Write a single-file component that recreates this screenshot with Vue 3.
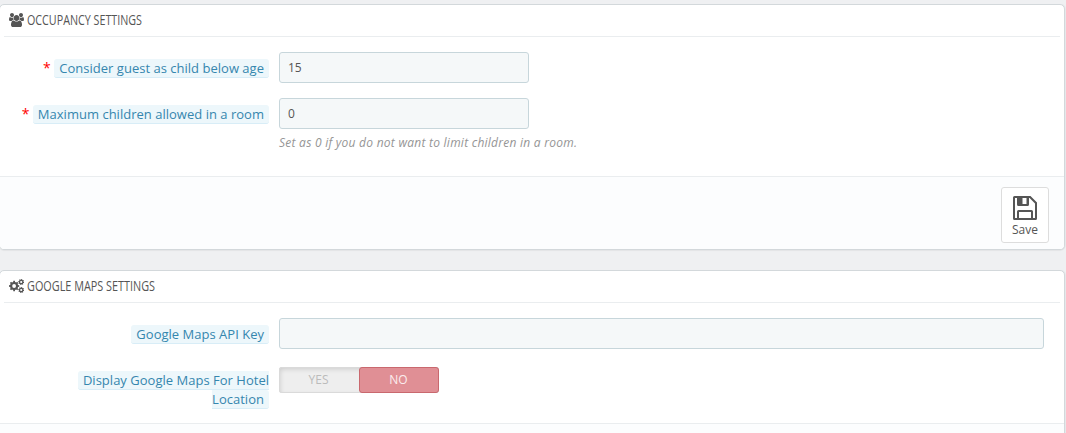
<script setup>
import { ref } from 'vue'

const childAge = ref('15')
const maxChildren = ref('0')
const apiKey = ref('')

// Outline of a toothed wheel with a round hole
function gear(cx, cy, outer, root, hole, teeth, turn = 0) {
  const step = (Math.PI * 2) / teeth
  const points = []
  for (let i = 0; i < teeth; i++) {
    const a = i * step + turn
    for (const [r, k] of [[root, -0.3], [outer, -0.2], [outer, 0.2], [root, 0.3]]) {
      points.push(`${(cx + r * Math.cos(a + k * step)).toFixed(2)} ${(cy + r * Math.sin(a + k * step)).toFixed(2)}`)
    }
  }
  return `M${points.join('L')}ZM${cx - hole} ${cy}a${hole} ${hole} 0 1 0 ${hole * 2} 0a${hole} ${hole} 0 1 0 ${-hole * 2} 0Z`
}

const gears = [
  gear(5.1, 7, 5.2, 4.1, 1.9, 8),
  gear(12.2, 3, 3, 2.4, 1.1, 8, 0.2),
  gear(12.2, 11, 3, 2.4, 1.1, 8, 0.2),
].join('')
</script>

<template>
  <main class="page">
    <section class="panel">
      <h3 class="heading">
        <svg class="heading-icon" viewBox="0 0 1920 1792">
          <path d="M593 896q-162 5-265 128h-134q-82 0-138-40.500t-56-118.500q0-353 124-353 6 0 43.500 21t97.500 42.500 119 21.500q67 0 133-23-5 37-5 66 0 139 81 256zm1071 637q0 120-73 189.500t-194 69.500h-874q-121 0-194-69.500t-73-189.500q0-53 3.500-103.500t14-109 26.500-108.500 43-97.500 62-81 85.500-53.500 111.500-20q10 0 43 21.500t73 48 107 48 135 21.500 135-21.500 107-48 73-48 43-21.500q61 0 111.500 20t85.500 53.500 62 81 43 97.500 26.500 108.500 14 109 3.500 103.500zm-1024-1277q0 106-75 181t-181 75-181-75-75-181 75-181 181-75 181 75 75 181zm704 384q0 159-112.500 271.500t-271.500 112.500-271.500-112.500-112.500-271.500 112.500-271.500 271.500-112.500 271.500 112.500 112.500 271.500zm576 225q0 78-56 118.500t-138 40.500h-134q-103-123-265-128 81-117 81-256 0-29-5-66 66 23 133 23 59 0 119-21.500t97.500-42.500 43.500-21q124 0 124 353zm-128-609q0 106-75 181t-181 75-181-75-75-181 75-181 181-75 181 75 75 181z" />
        </svg>
        <svg class="heading-text" width="116" height="20">
          <text x="0" y="13.500" textLength="115" lengthAdjust="spacingAndGlyphs">OCCUPANCY SETTINGS</text>
        </svg>
      </h3>
      <div class="body">
        <div class="row">
          <label class="label"><span class="star">*</span><span class="tag">Consider guest as child below age</span></label>
          <input v-model="childAge" class="input short" type="text">
        </div>
        <div class="row">
          <label class="label"><span class="star">*</span><span class="tag">Maximum children allowed in a room</span></label>
          <div class="field">
            <input v-model="maxChildren" class="input short" type="text">
            <p class="help">Set as 0 if you do not want to limit children in a room.</p>
          </div>
        </div>
      </div>
      <footer class="footer">
        <button class="save" type="button">
          <svg width="24" height="24" viewBox="0 0 24 24">
            <path fill-rule="evenodd" d="M1.500 0H17.500L24 6.500V22.500Q24 24 22.500 24H1.500Q0 24 0 22.500V1.500Q0 0 1.500 0ZM2 2V22H4V15.500Q4 14 5.500 14H18.500Q20 14 20 15.500V22H22V7.400L16.600 2H16V8.500Q16 10 14.500 10H5.500Q4 10 4 8.500V2ZM6 16V22H18V16ZM9.500 2V8H13.500V2Z" />
          </svg>
          <span>Save</span>
        </button>
      </footer>
    </section>

    <section class="panel">
      <h3 class="heading">
        <svg class="heading-icon" viewBox="0 0 15 14"><path fill-rule="evenodd" :d="gears" /></svg>
        <svg class="heading-text" width="129" height="20">
          <text x="0" y="13.500" textLength="128" lengthAdjust="spacingAndGlyphs">GOOGLE MAPS SETTINGS</text>
        </svg>
      </h3>
      <div class="body maps">
        <div class="row">
          <label class="label"><span class="tag">Google Maps API Key</span></label>
          <input v-model="apiKey" class="input" type="text">
        </div>
        <div class="row">
          <label class="label"><span class="tag">Display Google Maps For Hotel Location</span></label>
          <div class="switch">
            <span class="option">YES</span>
            <span class="option active">NO</span>
          </div>
        </div>
      </div>
      <footer class="footer"></footer>
    </section>
  </main>
</template>

<style>
body {
  background: #eff0f2;
  overflow: hidden;
}
</style>

<style scoped>
.page {
  box-sizing: border-box;
  width: 1066px;
  height: 433px;
  padding-top: 4px;
  overflow: hidden;
  background: #eff0f2;
  color: #555;
  font: 13px/19px "Open Sans", "Noto Sans", sans-serif;
}
.panel {
  box-sizing: border-box;
  width: 1066px;
  height: 246px;
  margin: 0 0 20px -1px;
  display: flex;
  flex-direction: column;
  background: #fff;
  border: 1px solid #d3d8db;
  border-radius: 5px;
  box-shadow: 0 1px 1px rgba(0, 0, 0, 0.05), 1px 0 0 #e6e9eb;
  overflow: hidden;
}
.heading {
  flex: none;
  box-sizing: border-box;
  height: 32px;
  margin: 0 4px;
  padding-left: 5px;
  display: flex;
  align-items: center;
  gap: 3px;
  border-bottom: 1px solid #eaedef;
}
.heading-icon {
  width: 15px;
  height: 14px;
  margin-top: -1px;
  fill: #555;
}
.heading-text {
  display: block;
  overflow: visible;
  fill: #555;
  font: 400 14.5px "Open Sans", "Noto Sans", sans-serif;
}
.body {
  flex: none;
  box-sizing: border-box;
  height: 139px;
  padding: 15px 20px 0 0;
}
.body.maps {
  height: 120px;
}
.row {
  display: flex;
  align-items: flex-start;
  margin-bottom: 15px;
}
.label {
  flex: none;
  box-sizing: border-box;
  width: 279px;
  padding: 7px 10px 0 70px;
  text-align: right;
  color: #3586ae;
}
.label:has(.star) {
  padding-left: 0;
  white-space: nowrap;
}
.tag {
  padding: 0 5px;
  letter-spacing: 0.015px;
  background: #edf7fb;
  border-bottom: 1px solid #d8edf7;
  border-radius: 3px;
}
.star {
  margin-right: 3.5px;
  color: #f00;
  font-size: 14px;
  line-height: 12px;
}
.input {
  box-sizing: border-box;
  flex: 1;
  min-width: 0;
  height: 31px;
  margin: 0;
  padding: 6px 8px;
  border: 1px solid #c7d6db;
  border-radius: 3px;
  outline: none;
  background: #f5f8f9;
  color: #555;
  font: 12px/17px "Open Sans", "Noto Sans", sans-serif;
}
.input.short {
  flex: none;
  width: 250px;
  display: block;
}
.help {
  margin: 5px 0 0;
  color: #959595;
  font-size: 12px;
  line-height: 17px;
  font-style: italic;
  letter-spacing: 0.25px;
}
.footer {
  flex: 1;
  box-sizing: border-box;
  padding: 10px 15px 0 0;
  display: flex;
  justify-content: flex-end;
  align-items: flex-start;
  background: #fcfdfe;
  border-top: 1px solid #eaedef;
}
.save {
  box-sizing: border-box;
  width: 48px;
  height: 56px;
  padding: 8px 0 0;
  display: flex;
  flex-direction: column;
  align-items: center;
  border: 1px solid #ddd;
  border-radius: 3px;
  background: #fff;
  color: #555;
  font: 12px/17px "Open Sans", "Noto Sans", sans-serif;
}
.save svg {
  flex: none;
  fill: #555;
}
.save span {
  margin-top: 1px;
}
.switch {
  box-sizing: border-box;
  display: flex;
  width: 160px;
  height: 26px;
  margin-top: 3px;
  border-radius: 3px;
  background: #eee;
  box-shadow: inset 0 0 0 1px #dadada, inset 1px 2px 5px rgba(0, 0, 0, 0.15);
}
.option {
  box-sizing: border-box;
  width: 80px;
  height: 26px;
  padding-right: 1px;
  text-align: center;
  color: #bbb;
  font-size: 12px;
  line-height: 25px;
}
.option.active {
  border: 1px solid #c9686e;
  border-radius: 3px;
  background: #e08f95;
  color: #fbeced;
  line-height: 23px;
}
</style>
